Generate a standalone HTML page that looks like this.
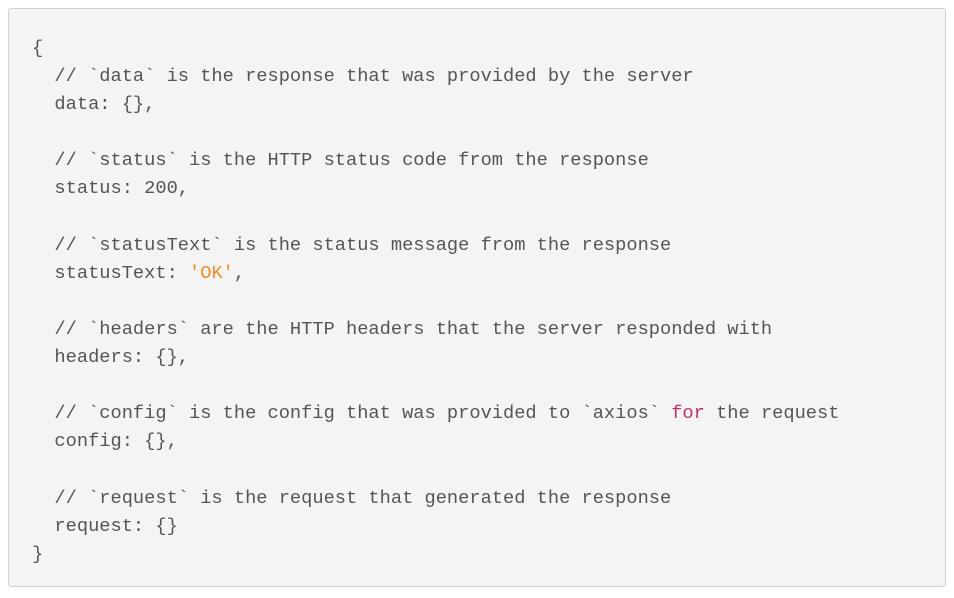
<!DOCTYPE html>
<html><head><style>
html,body{margin:0;padding:0;background:#fff;width:954px;height:598px;overflow:hidden}
.box{position:absolute;left:8px;top:8px;width:936px;height:577px;border:1px solid #d0d0d0;border-radius:3px;background:#f4f4f4}
pre{position:absolute;left:32px;top:34px;margin:0;font-family:"Liberation Mono",monospace;font-size:18.7px;line-height:28.1px;color:#555;white-space:pre}
.s{color:#f08c28}.k{color:#c0306a}
</style></head><body>
<div class="box"></div>
<pre>{
  // `data` is the response that was provided by the server
  data: {},

  // `status` is the HTTP status code from the response
  status: 200,

  // `statusText` is the status message from the response
  statusText: <span class="s">'OK'</span>,

  // `headers` are the HTTP headers that the server responded with
  headers: {},

  // `config` is the config that was provided to `axios` <span class="k">for</span> the request
  config: {},

  // `request` is the request that generated the response
  request: {}
}</pre>
</body></html>
